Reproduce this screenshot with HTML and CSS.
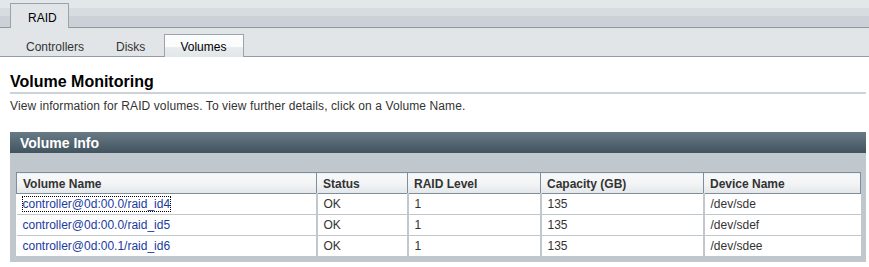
FILE: index.html
```html
<!DOCTYPE html>
<html>
<head>
    <meta charset="UTF-8">
    <title>RAID - Volumes</title>
    <link rel="stylesheet" href="styles.css">
</head>
<body>
    <div class="tabs-top">
        <span class="tab-top active">RAID</span>
    </div>
    <div class="tabs-sub">
        <span class="tab-sub">Controllers</span>
        <span class="tab-sub">Disks</span>
        <span class="tab-sub active">Volumes</span>
    </div>

    <div class="page">
        <h1>Volume Monitoring</h1>
        <p class="help">View information for RAID volumes. To view further details, click on a Volume Name.</p>

        <div class="panel">
            <div class="panel-title">Volume Info</div>
            <div class="panel-body">
                <table class="grid">
                    <thead>
                        <tr>
                            <th class="c-name">Volume Name</th>
                            <th class="c-status">Status</th>
                            <th class="c-level">RAID Level</th>
                            <th class="c-cap">Capacity (GB)</th>
                            <th>Device Name</th>
                        </tr>
                    </thead>
                    <tbody>
                        <tr>
                            <td><a href="#" class="focused">controller@0d:00.0/raid_id4</a></td>
                            <td>OK</td>
                            <td>1</td>
                            <td>135</td>
                            <td>/dev/sde</td>
                        </tr>
                        <tr>
                            <td><a href="#">controller@0d:00.0/raid_id5</a></td>
                            <td>OK</td>
                            <td>1</td>
                            <td>135</td>
                            <td>/dev/sdef</td>
                        </tr>
                        <tr>
                            <td><a href="#">controller@0d:00.1/raid_id6</a></td>
                            <td>OK</td>
                            <td>1</td>
                            <td>135</td>
                            <td>/dev/sdee</td>
                        </tr>
                    </tbody>
                </table>
            </div>
        </div>
    </div>
</body>
</html>
```

FILE: styles.css
```css
body {
    margin: 0;
    font-family: "Liberation Sans", Arial, sans-serif;
    font-size: 12px;
    color: #333;
    background: #fff;
}
.tabs-top {
    height: 24px;
    padding: 3px 0 0 10px;
    background: linear-gradient(#e2e7ea 0, #e2e7ea 8px, #d6dce0 8px, #d6dce0 16px, #ccd1d8 16px);
    border-bottom: 1px solid #8f97a3;
    display: flex;
}
.tab-top {
    display: block;
    width: 59px;
    box-sizing: border-box;
    height: 25px;
    padding: 7px 0 0 17px;
    color: #000;
    background: #e1e5e8;
    border: 1px solid #9aa2ad;
    border-bottom: none;
}
.tabs-sub {
    height: 28px;
    background: #e1e5e8;
    border-bottom: 1px solid #939daa;
    display: flex;
    align-items: flex-end;
    padding-left: 17px;
}
.tab-sub {
    display: block;
    height: 22px;
    box-sizing: border-box;
    padding: 6px 10px 0 9px;
    margin-right: 13px;
    color: #333;
}
.tab-sub.active {
    margin-left: -4px;
    width: 80px;
    padding: 5px 0 0 15px;
    color: #000;
    border: 1px solid #9aa2ad;
    border-bottom: none;
    margin-bottom: -1px;
    height: 23px;
    background: linear-gradient(#fbfcfc 0, #fbfcfc 12px, #e9edef 12px, #e1e6e9);
}
.page {
    padding: 0 3px 0 10px;
}
h1 {
    margin: 16px 0 0;
    font-size: 16px;
    color: #000;
    line-height: 18px;
    padding-bottom: 1px;
    border-bottom: 2px solid #cdd2d9;
}
.help {
    margin: 5px 0 0;
    line-height: 15px;
    color: #333;
    letter-spacing: 0.1px;
}
.panel {
    margin-top: 18px;
    background: #c0c8ce;
    padding-bottom: 6px;
}
.panel-title {
    height: 21px;
    box-sizing: border-box;
    padding: 3px 0 0 10px;
    color: #fff;
    font-weight: bold;
    font-size: 14px;
    background: linear-gradient(#677a86 0, #5b6e7a 7px, #4d606c 14px, #40535f);
}
.panel-body {
    padding: 19px 5px 0 6px;
}
.grid {
    width: 100%;
    border-collapse: collapse;
    background: #fff;
}
.grid th {
    text-align: left;
    font-weight: bold;
    color: #333;
    height: 19px;
    padding: 1px 6px 0;
    background: linear-gradient(#f8f9fa 0, #f2f4f5 10px, #e3e7ea);
    border: 1px solid #7f8e98;
}
.grid td {
    height: 20px;
    padding: 0 6px;
    color: #333;
    border-bottom: 1px solid #c0c8ce;
    border-left: 2px solid #c0c8ce;
}
.grid td:first-child {
    border-left: none;
}
.grid tr:last-child td {
    border-bottom: none;
}
.c-name { width: 287px; }
.c-status { width: 78px; }
.c-level { width: 120px; }
.c-cap { width: 150px; }
.grid a {
    color: #1a3aa0;
    text-decoration: none;
}
.grid a.focused {
    outline: 1px dotted #000;
}
```
